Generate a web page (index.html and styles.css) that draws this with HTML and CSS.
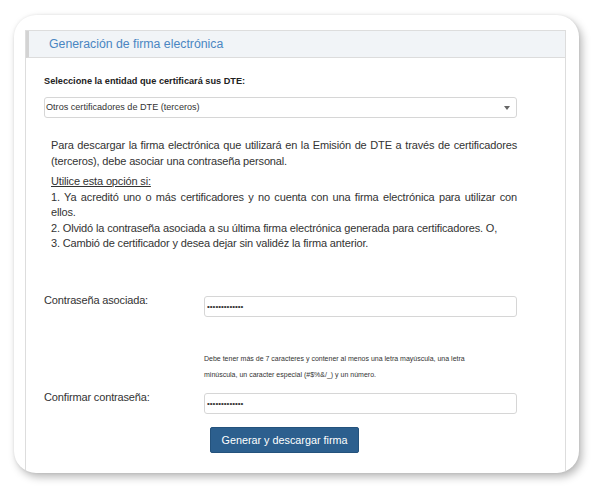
FILE: index.html
```html
<!DOCTYPE html>
<html lang="es">
<head>
<meta charset="utf-8">
<title>Generación de firma electrónica</title>
<link rel="stylesheet" href="styles.css">
</head>
<body>
<div class="card">
  <div class="panel">
    <div class="panel-head"><h3 class="panel-title">Generación de firma electrónica</h3></div>
    <div class="panel-body">
      <div class="entity-label">Seleccione la entidad que certificará sus DTE:</div>
      <div class="select">Otros certificadores de DTE (terceros)<span class="caret"></span></div>
      <div class="info">
        <p class="info-p">Para descargar la firma electrónica que utilizará en la Emisión de DTE a través de certificadores (terceros), debe asociar una contraseña personal.</p>
        <p class="info-p"><span class="u">Utilice esta opción si:</span><br>1. Ya acreditó uno o más certificadores y no cuenta con una firma electrónica para utilizar con ellos.<br>2. Olvidó la contraseña asociada a su última firma electrónica generada para certificadores. O,<br>3. Cambió de certificador y desea dejar sin validéz la firma anterior.</p>
      </div>
      <div class="form">
        <div class="form-label">Contraseña asociada:</div>
        <input class="input" type="password" value="Contrasena123">
        <div></div>
        <div class="hint">Debe tener más de 7 caracteres y contener al menos una letra mayúscula, una letra minúscula, un caracter especial (#$%&amp;/_) y un número.</div>
        <div class="form-label">Confirmar contraseña:</div>
        <input class="input" type="password" value="Contrasena123">
        <div></div>
        <div><button class="btn" type="button">Generar y descargar firma</button></div>
      </div>
    </div>
  </div>
</div>
</body>
</html>
```
FILE: styles.css
```css
html, body {
  margin: 0;
  padding: 0;
  background: #ffffff;
}
body {
  font-family: "Liberation Sans", Arial, sans-serif;
  color: #333333;
  width: 600px;
  height: 495px;
  overflow: hidden;
}
.card {
  margin: 15px 0 0 14px;
  width: 565px;
  height: 458px;
  box-sizing: border-box;
  padding: 15px 0 0 11px;
  background: #ffffff;
  border-radius: 22px;
  box-shadow: 3px 4px 8px rgba(0, 0, 0, 0.28), 0 0 3px rgba(0, 0, 0, 0.08);
  overflow: hidden;
}
.panel {
  width: 541px;
  height: 460px;
  box-sizing: border-box;
  border: 1px solid #dddddd;
  border-bottom: none;
}
.panel-head {
  height: 27px;
  box-sizing: border-box;
  background: #f1f4f7;
  border-left: 3px solid #d3d3d3;
  border-bottom: 1px solid #dcdcdc;
  display: flex;
  align-items: center;
  padding-left: 20px;
}
.panel-title {
  margin: 0;
  font-weight: normal;
  font-size: 12.3px;
  color: #4a86c2;
}
.panel-body {
  padding: 0 48px 0 18px;
}
.entity-label {
  margin-top: 17px;
  font-size: 9.2px;
  line-height: 12px;
  font-weight: bold;
  color: #222222;
}
.select {
  position: relative;
  margin-top: 10px;
  height: 21px;
  box-sizing: border-box;
  border: 1px solid #d6d6d6;
  border-radius: 3px;
  font-size: 9.1px;
  line-height: 19px;
  padding-left: 1px;
  color: #333333;
}
.caret {
  position: absolute;
  right: 6px;
  top: 8px;
  width: 0;
  height: 0;
  border-left: 3.5px solid transparent;
  border-right: 3.5px solid transparent;
  border-top: 4px solid #666666;
}
.info {
  margin-top: 20px;
  padding-left: 7px;
  font-size: 11px;
  letter-spacing: -0.15px;
  line-height: 15.5px;
  text-align: justify;
}
.info-p {
  margin: 0 0 5px 0;
}
.u {
  text-decoration: underline;
}
.form {
  margin-top: 41px;
  display: grid;
  grid-template-columns: 160px 313px;
}
.form-label {
  font-size: 11px;
  letter-spacing: -0.15px;
  line-height: 14px;
  color: #333333;
}
.input {
  margin-top: 3px;
  height: 21px;
  box-sizing: border-box;
  border: 1px solid #d6d6d6;
  border-radius: 3px;
  padding: 0 2px;
  font-family: "Liberation Sans", Arial, sans-serif;
  font-size: 8px;
  color: #333333;
  width: 313px;
  background: #ffffff;
}
.hint {
  margin-top: 34px;
  margin-bottom: 7px;
  max-width: 268px;
  font-size: 7px;
  line-height: 16px;
  color: #333333;
}
.btn {
  margin-top: 13px;
  margin-left: 6px;
  width: 149px;
  height: 26px;
  background: #2c5f8e;
  border: 1px solid #24527c;
  border-radius: 2px;
  color: #ffffff;
  font-family: "Liberation Sans", Arial, sans-serif;
  font-size: 10.8px;
  padding: 0;
}
```
